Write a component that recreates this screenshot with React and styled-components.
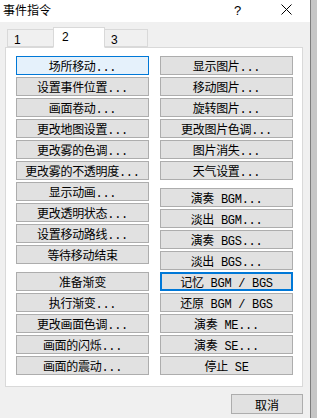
import React from 'react';
import styled, { createGlobalStyle } from 'styled-components';

const GlobalStyle = createGlobalStyle`
  html, body {
    margin: 0;
    padding: 0;
    background: #c8c8c8;
  }
  body {
    font-family: "Noto Sans CJK SC", "Noto Sans", sans-serif;
  }
`;

const Screen = styled.div`
  display: flex;
  width: 317px;
  height: 418px;
  overflow: hidden;
`;

const Window = styled.div`
  width: 310px;
  height: 418px;
  border-right: 1px solid #7d7d7d;
  background: #f0f0f0;
  display: flex;
  flex-direction: column;
`;

const Shade = styled.div`
  flex: 1;
  background: #c6c6c6;
`;

const TitleBar = styled.div`
  height: 22px;
  background: #ffffff;
  display: flex;
  align-items: center;
  padding-left: 3px;
  font-size: 12px;
  color: #000;
`;

const Title = styled.span`
  flex: 1;
  line-height: 22px;
  margin-top: -2px;
`;

const Help = styled.span`
  width: 12px;
  margin-right: 35px;
  font-family: "Liberation Sans", sans-serif;
  font-size: 13px;
  margin-top: -2px;
`;

const Close = styled.svg`
  width: 11px;
  height: 11px;
  margin-right: 18px;
  margin-top: -3px;
`;

const Body = styled.div`
  flex: 1;
  padding: 6px 7px 0 5px;
  display: flex;
  flex-direction: column;
`;

const TabRow = styled.div`
  display: flex;
  align-items: flex-end;
  margin-left: 2px;
  height: 20px;
  position: relative;
  z-index: 1;
  margin-bottom: -1px;
`;

const Tab = styled.div`
  box-sizing: border-box;
  width: ${p => p.$w}px;
  height: ${p => (p.$active ? 21 : 18)}px;
  border: 1px solid #d9d9d9;
  border-bottom: ${p => (p.$active ? '1px solid #ffffff' : '1px solid #d9d9d9')};
  margin-left: ${p => (p.$first ? 0 : -1)}px;
  margin-bottom: ${p => (p.$active ? 0 : 1)}px;
  background: ${p => (p.$active ? '#ffffff' : '#f0f0f0')};
  font-family: "Liberation Sans", sans-serif;
  font-size: 12px;
  padding-left: ${p => (p.$active ? 8 : 6)}px;
  padding-top: ${p => (p.$active ? 2 : 3)}px;
  color: #000;
`;

const Panel = styled.div`
  box-sizing: border-box;
  width: 298px;
  height: 340px;
  background: #ffffff;
  border: 1px solid #d9d9d9;
  padding: 8px 0 0 10px;
  display: grid;
  grid-template-columns: 133px 133px;
  column-gap: 11px;
  align-items: start;
`;

const Column = styled.div`
  display: flex;
  flex-direction: column;
  gap: 8px;
`;

const Group = styled.div`
  display: flex;
  flex-direction: column;
  gap: 2px;
`;

const CmdButton = styled.div`
  box-sizing: border-box;
  height: 19px;
  border: ${p => (p.$default ? '2px solid #0078d7' : p.$focus ? '1px solid #0078d7' : '1px solid #adadad')};
  background: ${p => (p.$focus ? '#e5f1fb' : '#e1e1e1')};
  display: flex;
  align-items: center;
  justify-content: center;
  font-family: "Liberation Mono", "Noto Sans CJK SC", monospace;
  font-size: 12px;
  letter-spacing: -0.3px;
  color: #000;
  white-space: pre;
`;

const Footer = styled.div`
  display: flex;
  justify-content: flex-end;
  padding-top: 7px;
`;

const CancelButton = styled.div`
  box-sizing: border-box;
  width: 72px;
  height: 20px;
  border: 1px solid #adadad;
  background: #e1e1e1;
  display: flex;
  align-items: center;
  justify-content: center;
  font-size: 12px;
  margin-right: 0;
`;

const left = [
  ['场所移动...', '设置事件位置...', '画面卷动...', '更改地图设置...', '更改雾的色调...', '更改雾的不透明度...', '显示动画...', '更改透明状态...', '设置移动路线...', '等待移动结束'],
  ['准备渐变', '执行渐变...', '更改画面色调...', '画面的闪烁...', '画面的震动...'],
];

const right = [
  ['显示图片...', '移动图片...', '旋转图片...', '更改图片色调...', '图片消失...', '天气设置...'],
  ['演奏 BGM...', '淡出 BGM...', '演奏 BGS...', '淡出 BGS...', '记忆 BGM / BGS', '还原 BGM / BGS', '演奏 ME...', '演奏 SE...', '停止 SE'],
];

const renderColumn = (groups) => (
  <Column>
    {groups.map((g, gi) => (
      <Group key={gi}>
        {g.map(label => (
          <CmdButton
            key={label}
            $focus={label === '场所移动...'}
            $default={label === '记忆 BGM / BGS'}
          >
            {label}
          </CmdButton>
        ))}
      </Group>
    ))}
  </Column>
);

export default function App() {
  return (
    <>
      <GlobalStyle />
      <Screen>
        <Window>
          <TitleBar>
            <Title>事件指令</Title>
            <Help>?</Help>
            <Close viewBox="0 0 11 11">
              <path d="M0.5 0.5 L10.5 10.5 M10.5 0.5 L0.5 10.5" stroke="#000" strokeWidth="1" fill="none" />
            </Close>
          </TitleBar>
          <Body>
            <TabRow>
              <Tab $w={47} $first>1</Tab>
              <Tab $w={52} $active>2</Tab>
              <Tab $w={44}>3</Tab>
            </TabRow>
            <Panel>
              {renderColumn(left)}
              {renderColumn(right)}
            </Panel>
            <Footer>
              <CancelButton>取消</CancelButton>
            </Footer>
          </Body>
        </Window>
        <Shade />
      </Screen>
    </>
  );
}
